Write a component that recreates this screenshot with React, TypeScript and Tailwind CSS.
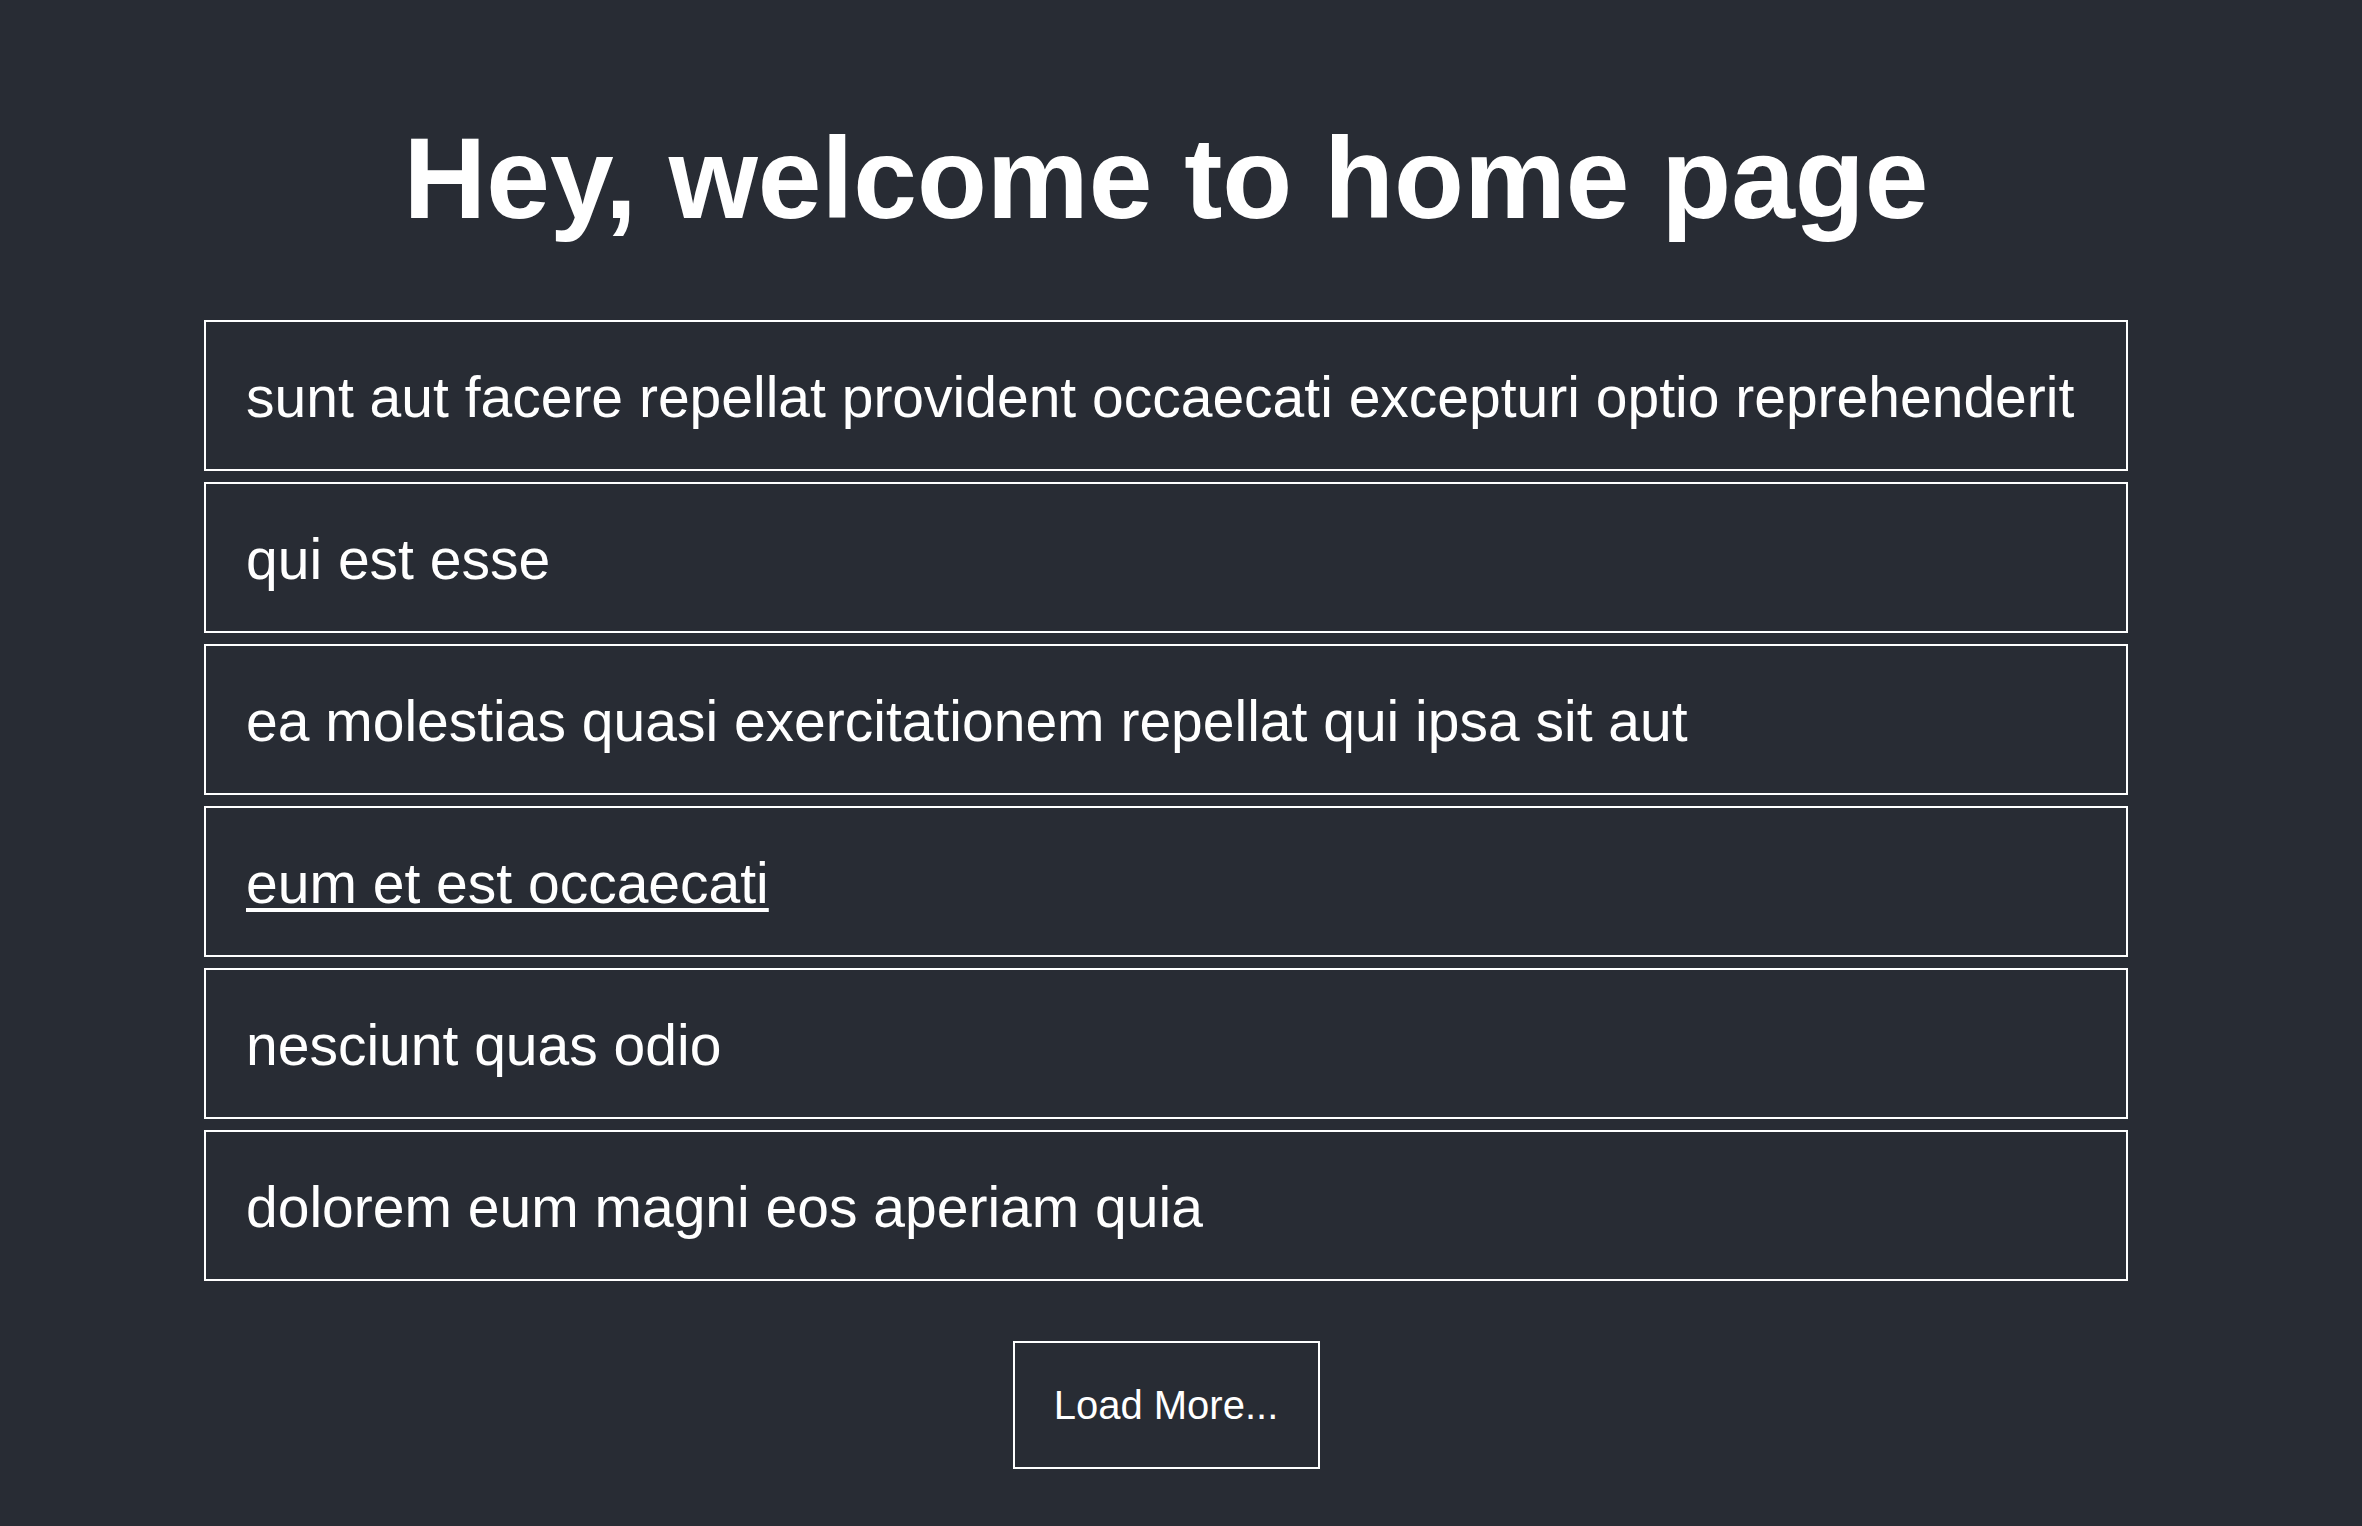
import React from "react";

const posts = [
  "sunt aut facere repellat provident occaecati excepturi optio reprehenderit",
  "qui est esse",
  "ea molestias quasi exercitationem repellat qui ipsa sit aut",
  "eum et est occaecati",
  "nesciunt quas odio",
  "dolorem eum magni eos aperiam quia",
];

export default function App() {
  return (
    <div className="min-h-screen bg-[#282c34] text-white font-['Liberation_Sans',Arial,sans-serif] pl-[204px] pr-[234px] pt-[121px] pb-[60px]">
      <h1 className="text-center font-bold text-[114.5px] leading-none">
        Hey, welcome to home page
      </h1>
      <ul className="mt-[84.5px] flex flex-col gap-[11px]">
        {posts.map((p, i) => (
          <li
            key={i}
            className="h-[151px] border-2 border-white flex items-center pl-[40px] pt-[4px] text-[57px]"
          >
            <span className={i === 3 ? "underline decoration-[4px] underline-offset-[5px]" : ""}>{p}</span>
          </li>
        ))}
      </ul>
      <div className="flex justify-center mt-[60px]">
        <button className="w-[307px] h-[128px] border-2 border-white text-[40px] text-white bg-transparent">
          Load More...
        </button>
      </div>
    </div>
  );
}
